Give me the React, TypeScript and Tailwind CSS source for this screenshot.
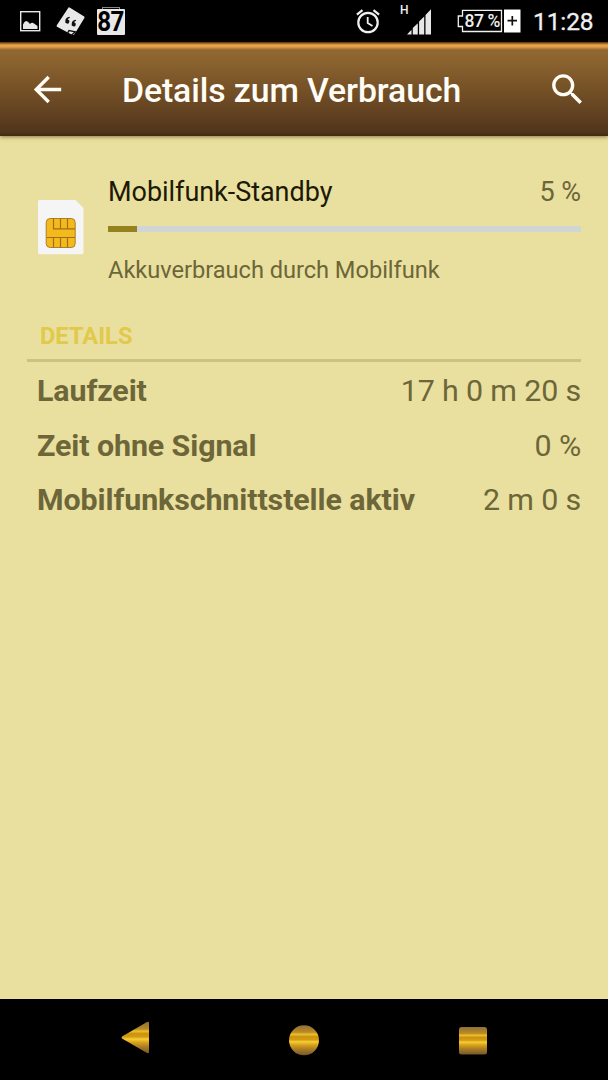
import React from "react";

function StatusBar() {
  return (
    <div className="flex h-[42px] shrink-0 items-start bg-black text-[#f0f0f0]">
      <svg className="ml-[20px] mt-[11px] h-[21px] w-[21px] shrink-0" viewBox="0 0 21 21">
        <rect x="0.7" y="0.7" width="19" height="19" fill="none" stroke="#e8e8e8" strokeWidth="1.4" />
        <path d="M3 18v-4.500Q4 10.500 6 10Q8 10 10 13Q12 11 14 12.500L17.500 15V18Z" fill="#e8e8e8" />
      </svg>
      <svg className="ml-[15px] mt-[7px] h-[29px] w-[30px] shrink-0" viewBox="0 0 30 29">
        <path d="M12.500 0.500Q13 0 14 0.800L28.200 9.500Q28.800 10 28.400 11L18.500 27.200Q17.500 28.200 16 27.800L1 19.800Q0.300 19.300 0.800 18.300Z" fill="#e8e8e8" />
        <path d="M13.500 9.800Q9.300 10.500 9.300 14A2.100 2.100 0 1 0 11.700 12.500Q11.900 11.300 13.900 11.100ZM19.700 12.800Q15.800 13.500 15.700 16.700A2.100 2.100 0 1 0 18.200 15.300Q18.500 14.100 20.200 14Z" fill="#111" />
        <path d="M11 27L13 23.600L19.500 24.800L15.500 28" fill="none" stroke="#111" strokeWidth="1.400" />
      </svg>
      <div className="ml-[11px] mt-[7px] flex w-[28px] shrink-0 flex-col items-center">
        <div className="h-[2px] w-[18px] border-x border-t border-[#888]" />
        <div className="flex h-[26px] w-[28px] items-center justify-center rounded-[1px] bg-[#e8e8e8] text-black">
          <span className="scale-x-[0.860] text-[28px] font-bold leading-[26px] tracking-[-0.500px]">87</span>
        </div>
      </div>
      <svg className="ml-[231px] mt-[9px] h-[25px] w-[24px] shrink-0" viewBox="0 0 24 25" fill="none" stroke="#f0f0f0">
        <circle cx="12" cy="13.500" r="9.700" strokeWidth="2.200" />
        <path d="M0.900 5.700L6.500 1.200M23.100 5.700L17.500 1.200" strokeWidth="2.200" />
        <path d="M11.700 8V14L16.500 17" strokeWidth="1.800" />
      </svg>
      <div className="ml-[20px] mt-[4px] w-[8px] text-[12px] font-medium leading-[12px]">H</div>
      <svg className="ml-[-2px] mt-[9px] h-[26px] w-[26px] shrink-0" viewBox="0 0 25 26" fill="#e8e8e8">
        <path d="M0.500 25.500L5 20.800V25.500ZM6.300 19L11.300 14.300V25.500H6.300ZM12.600 12.500L17.700 7.500V25.500H12.600ZM19 6L24.500 0.300V25.500H19Z" />
      </svg>
      <div className="relative ml-[25px] mt-[9px] flex h-[24px] w-[64px] shrink-0">
        <svg className="h-[24px] w-[64px]" viewBox="0 0 64 24">
          <path d="M5.500 1.300H44.500V22.500H5.500V17.500H1.300V7H5.500Z" fill="none" stroke="#f0f0f0" strokeWidth="1.300" />
          <rect x="47" y="0.500" width="16.500" height="23" fill="#fff" />
          <path d="M55.300 7V16.500M50.500 11.700H60" stroke="#111" strokeWidth="1.700" />
        </svg>
        <span className="absolute left-[7.500px] top-0 whitespace-nowrap text-[17.500px] font-medium leading-[24px] tracking-[-0.400px]">87 %</span>
      </div>
      <div className="ml-[12px] mt-[7px] whitespace-nowrap text-[24.500px] leading-[30px] tracking-[-0.100px] [-webkit-text-stroke:0.300px_#f0f0f0]">11:28</div>
    </div>
  );
}

function AppBar() {
  return (
    <header className="relative z-10 flex h-[94px] shrink-0 items-start bg-[linear-gradient(180deg,#4a2f0c_0px,#b87a30_2px,#eaa54c_3px,#df9d49_5px,#a87332_7px,#926832_8px,#8a622e_20px,#6f4c25_55px,#51351b_90px,#402a14_94px)] text-[#fffdf5] shadow-[0_1px_4px_rgba(60,40,0,0.55)]">
      <svg className="ml-[27px] mt-[27px] h-[41px] w-[41px] shrink-0" viewBox="0 0 24 24" fill="currentColor">
        <path d="M20 11H7.830l5.590-5.590L12 4l-8 8 8 8 1.410-1.410L7.830 13H20v-2z" />
      </svg>
      <h1 className="ml-[54px] mt-[29px] flex-1 whitespace-nowrap text-[33.800px] font-medium leading-[40px] tracking-[-0.100px]">Details zum Verbrauch</h1>
      <svg className="mr-[20px] mt-[27px] h-[41px] w-[41px] shrink-0" viewBox="0 0 24 24" fill="currentColor">
        <path d="M15.500 14h-.79l-.28-.27C15.410 12.590 16 11.110 16 9.500 16 5.910 13.090 3 9.500 3S3 5.910 3 9.500 5.910 16 9.500 16c1.610 0 3.090-.59 4.230-1.570l.27.28v.79l5 4.990L20.490 19l-4.990-5zm-6 0C7.010 14 5 11.990 5 9.500S7.010 5 9.500 5 14 7.010 14 9.500 11.990 14 9.500 14z" />
      </svg>
    </header>
  );
}

function SimIcon() {
  return (
    <svg className="ml-[38px] mt-[64px] h-[55px] w-[46px] shrink-0" viewBox="0 0 46 55">
      <path d="M1.500 0H37.500L45.500 8V52.500Q45.500 54.200 44 54.200H1.500Q0 54.200 0 52.500V1.500Q0 0 1.500 0Z" fill="#f5f5f5" />
      <rect x="8.200" y="18.500" width="29" height="29" rx="4" fill="#f5b91c" stroke="#a98128" strokeWidth="1" />
      <path d="M15.500 18.500V28.800H37M22.500 18.500V28.800M29.500 18.500V28.800M8.500 37.500H37M15.500 37.500V47.500M22.500 37.500V47.500M29.500 37.500V47.500" fill="none" stroke="#9b701c" strokeWidth="1.200" />
    </svg>
  );
}

const rows = [
  ["Laufzeit", "17 h 0 m 20 s"],
  ["Zeit ohne Signal", "0 %"],
  ["Mobilfunkschnittstelle aktiv", "2 m 0 s"],
];

function NavBar() {
  return (
    <nav className="flex h-[81px] shrink-0 items-start bg-black">
      <svg className="h-[81px] w-full" viewBox="0 0 608 81">
        <defs>
          <linearGradient id="gold" x1="0" y1="0" x2="0" y2="1">
            <stop offset="0" stopColor="#8f7038" />
            <stop offset="0.230" stopColor="#b98a25" />
            <stop offset="0.300" stopColor="#edc02b" />
            <stop offset="0.380" stopColor="#cb920f" />
            <stop offset="0.480" stopColor="#d49c14" />
            <stop offset="0.550" stopColor="#f6cf35" />
            <stop offset="0.650" stopColor="#d9a31b" />
            <stop offset="0.800" stopColor="#a97c27" />
            <stop offset="1" stopColor="#745827" />
          </linearGradient>
        </defs>
        <path d="M122 37.500Q121 38.500 122 39.500L147 54Q149 55 149 53V24Q149 22 147 23Z" fill="url(#gold)" />
        <circle cx="304" cy="41.300" r="15" fill="url(#gold)" />
        <rect x="459" y="28" width="28" height="27.500" rx="2.500" fill="url(#gold)" />
      </svg>
    </nav>
  );
}

export default function App() {
  return (
    <div className="flex h-[1080px] w-[608px] flex-col overflow-hidden bg-[#e9e09f] font-['Roboto',sans-serif]">
      <StatusBar />
      <AppBar />
      <main className="flex flex-1 flex-col text-[#6d6638]">
        <section className="flex h-[185px]">
          <SimIcon />
          <div className="ml-[24px] mr-[27px] flex flex-1 flex-col pt-[40px]">
            <div className="flex justify-between text-[27px] leading-[32px] tracking-[-0.040px]">
              <span className="text-[#1d1905]">Mobilfunk-Standby</span>
              <span>5 %</span>
            </div>
            <div className="mt-[18px] h-[6px] bg-[#d0d6d5]">
              <div className="h-full w-[29px] bg-[#96821c]" />
            </div>
            <p className="mt-[24px] text-[23.650px] leading-[28px] tracking-[-0.040px]">Akkuverbrauch durch Mobilfunk</p>
          </div>
        </section>
        <section className="flex flex-col">
          <h2 className="ml-[27px] mr-[27px] h-[41px] border-b-[3px] border-[#cbc184] pl-[13px] text-[23.650px] font-bold leading-[30px] text-[#e2c94b]">DETAILS</h2>
          <dl className="flex flex-col pl-[37px] pr-[27px] pt-[2px]">
            {rows.map(([label, value]) => (
              <div key={label} className="flex h-[54.500px] items-center justify-between whitespace-nowrap text-[30.400px] leading-[54px] tracking-[-0.100px]">
                <dt className="font-bold">{label}</dt>
                <dd className="tracking-[-0.150px]">{value}</dd>
              </div>
            ))}
          </dl>
        </section>
      </main>
      <NavBar />
    </div>
  );
}
